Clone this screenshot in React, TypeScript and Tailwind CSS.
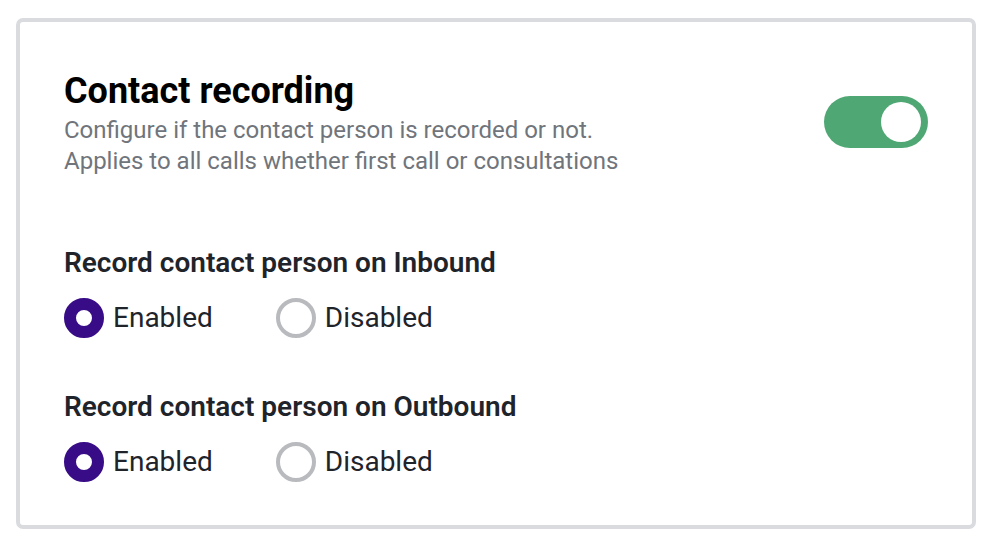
import React from "react";

function Radio({ checked, label }: { checked: boolean; label: string }) {
  return (
    <label className="flex items-center gap-[9px]">
      {checked ? (
        <span className="box-border h-[40px] w-[40px] rounded-full border-[12px] border-[#380c86] bg-white" />
      ) : (
        <span className="box-border h-[40px] w-[40px] rounded-full border-[4px] border-[#b8babe] bg-white" />
      )}
      <span className="text-[28px] leading-[32px] text-[#1f242b]">{label}</span>
    </label>
  );
}

function Group({ title }: { title: string }) {
  return (
    <div className="flex flex-col">
      <div className="text-[28px] font-semibold leading-[32px] text-[#1f242b]">{title}</div>
      <div className="mt-[19px] flex items-center gap-[63px]">
        <Radio checked label="Enabled" />
        <Radio checked={false} label="Disabled" />
      </div>
    </div>
  );
}

export default function App() {
  return (
    <div
      className="h-[558px] w-[1000px] bg-white pl-[16px] pt-[18px]"
      style={{ fontFamily: "Roboto, 'Liberation Sans', sans-serif" }}
    >
      <div className="box-border h-[511px] w-[960px] rounded-[7px] border-[4px] border-[#d9dbde] bg-white px-[44px] pt-[49px]">
        <div className="flex items-start justify-between">
          <div className="flex flex-col">
            <div className="text-[36px] font-bold leading-[40px] text-black">Contact recording</div>
            <div className="mt-[4px] text-[24px] leading-[31px] text-[#70757c]">
              Configure if the contact person is recorded or not.
              <br />
              Applies to all calls whether first call or consultations
            </div>
          </div>
          <div className="mt-[25px] flex h-[52px] w-[104px] items-center justify-end rounded-full bg-[#4fa774] pr-[7px]">
            <span className="h-[40px] w-[40px] rounded-full bg-white" />
          </div>
        </div>
        <div className="mt-[70px]">
          <Group title="Record contact person on Inbound" />
        </div>
        <div className="mt-[53px]">
          <Group title="Record contact person on Outbound" />
        </div>
      </div>
    </div>
  );
}
